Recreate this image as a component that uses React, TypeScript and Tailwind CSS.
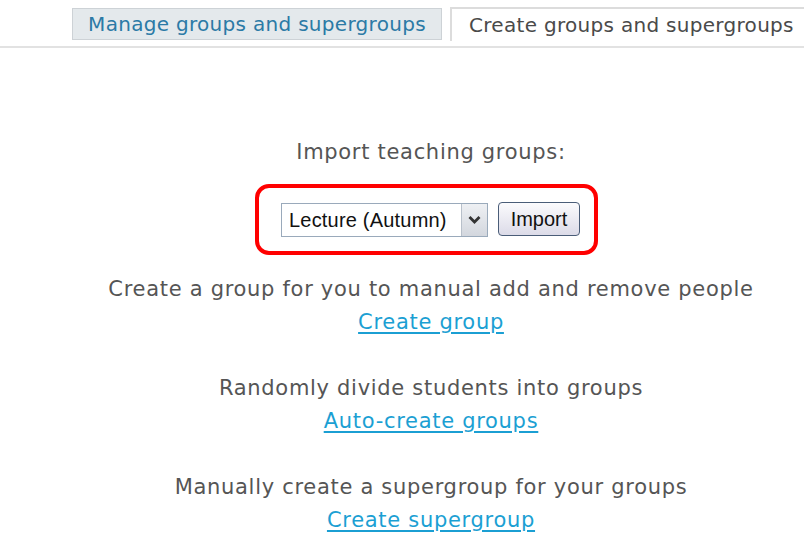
import React from "react";

const verdana = { fontFamily: "Verdana, 'DejaVu Sans', sans-serif" };

export default function App() {
  return (
    <div className="w-[804px] h-[543px] bg-white overflow-hidden relative" style={verdana}>
      <div className="flex items-end h-[48px] border-b-2 border-[#e2e2e2] pl-[72px] gap-[8px]">
        <div className="h-[32px] mb-[6px] w-[370px] flex items-center justify-center bg-[#e4e9ec] border border-[#cdd2d6] text-[20px] tracking-[0.3px] text-[#2b7aa6]">
          Manage groups and supergroups
        </div>
        <div className="h-[34px] mb-[5px] flex-1 flex items-center pl-[17px] bg-white border-l-2 border-t-2 border-[#dcdcdc] text-[20px] tracking-[0.3px] text-[#4a4a4a] whitespace-nowrap">
          Create groups and supergroups
        </div>
      </div>
      <div className="pl-[58px] flex flex-col items-center text-[21px] tracking-[0.7px] text-[#555] leading-[33px]">
        <div className="mt-[88px]">Import teaching groups:</div>
        <div className="mt-[15px] mr-[9px] w-[343px] h-[71px] border-[4px] border-[#ff0000] rounded-[14px] flex items-center justify-start gap-[10px] pl-[22px] pb-[2px] tracking-normal">
          <div className="flex items-center w-[207px] h-[34px] border border-[#9aaabb] bg-white mt-[2px]" style={{ fontFamily: "'Liberation Sans', Arial, sans-serif" }}>
            <span className="flex-1 pl-[7px] text-[20px] tracking-[0.2px] text-[#111] leading-none">Lecture (Autumn)</span>
            <span className="w-[26px] h-[32px] flex items-center justify-center bg-gradient-to-b from-[#eef0f3] to-[#d3d7de] border-l border-[#b8c0ca]">
              <svg width="13" height="10" viewBox="0 0 13 10">
                <path d="M1.5 2 L6.5 7 L11.5 2" fill="none" stroke="#333" strokeWidth="2.8" />
              </svg>
            </span>
          </div>
          <div
            className="w-[82px] h-[34px] flex items-center justify-center rounded-[4px] border border-[#4a5d78] bg-gradient-to-b from-[#fbfbfd] to-[#dcdbe8] text-[20px] text-[#111] leading-none"
            style={{ fontFamily: "'Liberation Sans', Arial, sans-serif" }}
          >
            Import
          </div>
        </div>
        <div className="mt-[18px]">Create a group for you to manual add and remove people</div>
        <a className="text-[#1b9fd3] underline underline-offset-[3px]">Create group</a>
        <div className="mt-[33px]">Randomly divide students into groups</div>
        <a className="text-[#1b9fd3] underline underline-offset-[3px]">Auto-create groups</a>
        <div className="mt-[33px]">Manually create a supergroup for your groups</div>
        <a className="text-[#1b9fd3] underline underline-offset-[3px]">Create supergroup</a>
      </div>
    </div>
  );
}
